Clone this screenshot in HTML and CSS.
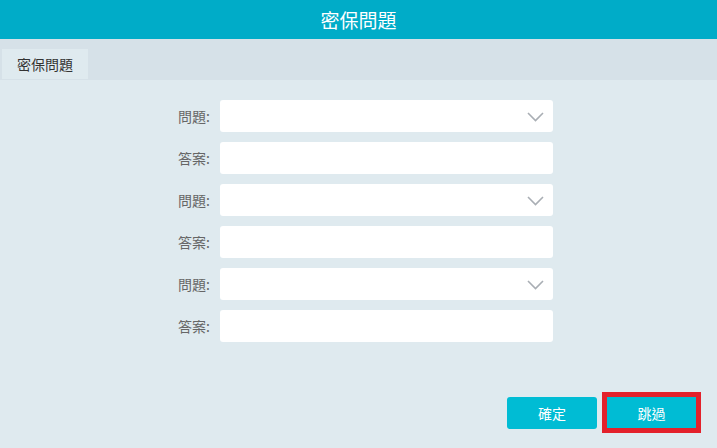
FILE: index.html
```html
<!DOCTYPE html>
<html lang="zh-Hant">
<head>
<meta charset="utf-8">
<title>密保問題</title>
<link rel="stylesheet" href="styles.css">
</head>
<body>
<div class="page">
  <header class="top">密保問題</header>
  <nav class="tabs"><div class="tab">密保問題</div></nav>
  <main class="content">
    <form class="form">
      <label class="lbl">問題:</label>
      <div class="field select"><svg class="chev" width="17" height="10" viewBox="0 0 17 10"><path d="M1 1 L8.5 8.5 L16 1" fill="none" stroke="#a9aeb4" stroke-width="1.6"/></svg></div>
      <label class="lbl">答案:</label>
      <div class="field"></div>
      <label class="lbl">問題:</label>
      <div class="field select"><svg class="chev" width="17" height="10" viewBox="0 0 17 10"><path d="M1 1 L8.5 8.5 L16 1" fill="none" stroke="#a9aeb4" stroke-width="1.6"/></svg></div>
      <label class="lbl">答案:</label>
      <div class="field"></div>
      <label class="lbl">問題:</label>
      <div class="field select"><svg class="chev" width="17" height="10" viewBox="0 0 17 10"><path d="M1 1 L8.5 8.5 L16 1" fill="none" stroke="#a9aeb4" stroke-width="1.6"/></svg></div>
      <label class="lbl">答案:</label>
      <div class="field"></div>
    </form>
    <div class="actions">
      <button class="btn" type="button">確定</button>
      <div class="mark"><button class="btn btn-skip" type="button">跳過</button></div>
    </div>
  </main>
</div>
</body>
</html>
```
FILE: styles.css
```css
html, body {
  margin: 0;
  padding: 0;
}
body {
  font-family: "Noto Sans CJK TC", "Noto Sans", sans-serif;
  background: #dfeaef;
  width: 717px;
  height: 448px;
  overflow: hidden;
}
.page {
  display: flex;
  flex-direction: column;
  height: 448px;
}
.top {
  height: 39px;
  background: #00acc8;
  color: #fff;
  font-size: 19px;
  display: flex;
  align-items: center;
  justify-content: center;
}
.tabs {
  background: #d6e1e8;
  height: 41px;
  box-sizing: border-box;
  padding: 10px 0 0 2px;
  display: flex;
}
.tab {
  width: 86px;
  height: 30px;
  background: #dfeaef;
  color: #333;
  font-size: 14px;
  display: flex;
  align-items: center;
  justify-content: center;
}
.content {
  flex: 1;
  display: flex;
  flex-direction: column;
  padding-top: 20px;
}
.form {
  display: grid;
  grid-template-columns: 60px 333px;
  column-gap: 10px;
  row-gap: 10px;
  padding-left: 150px;
  margin: 0;
}
.lbl {
  font-size: 14px;
  color: #666;
  display: flex;
  align-items: center;
  justify-content: flex-end;
  height: 32px;
}
.field {
  height: 32px;
  background: #fff;
  border-radius: 3px;
  display: flex;
  align-items: center;
  justify-content: flex-end;
}
.chev {
  margin-right: 9px;
  margin-top: 1px;
}
.actions {
  margin-top: auto;
  display: flex;
  justify-content: flex-end;
  align-items: center;
  gap: 5px;
  padding: 0 16px 15px 0;
}
.btn {
  width: 90px;
  height: 32px;
  border: none;
  border-radius: 3px;
  background: #00bcd4;
  color: #fff;
  font-family: inherit;
  font-size: 14px;
  padding: 0;
}
.btn-skip {
  width: 89px;
  height: 31px;
  border-radius: 0;
}
.mark {
  border: 5px solid #e3212b;
  display: flex;
}
```
